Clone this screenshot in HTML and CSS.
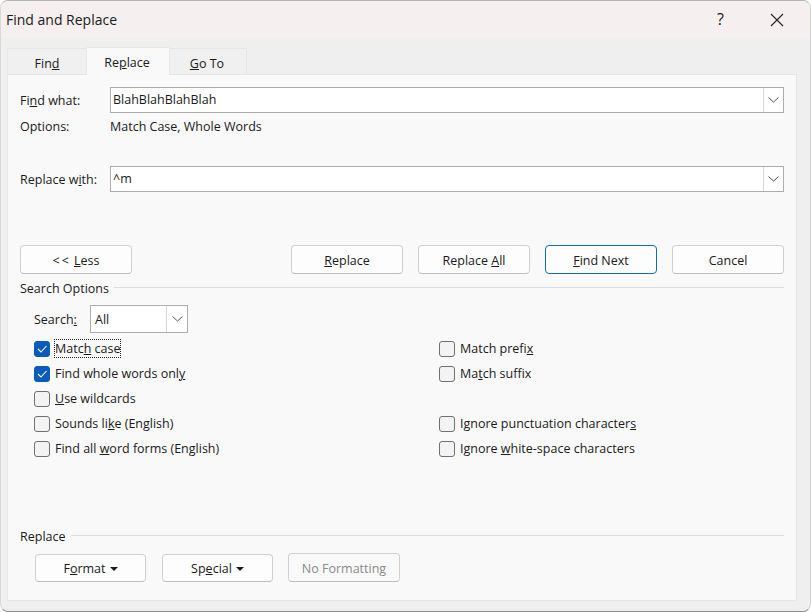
FILE: index.html

```html
<!doctype html>
<html>
    <head>
        <title>Find and Replace</title>
        <link rel="stylesheet" href="styles.css">
    </head>
    <body>
        <div class="window">
            <div class="titlebar">
                <span class="title">Find and Replace</span>
                <span class="help">?</span>
                <svg class="close" width="14" height="14" viewBox="0 0 14 14">
                    <path d="M1 1 L13 13 M13 1 L1 13" stroke="#222" stroke-width="1.1" fill="none"></path>
                </svg>
            </div>

            <div class="tabs">
                <div class="tab tab-find">Fin<u>d</u></div>
                <div class="tab tab-active">Re<u>p</u>lace</div>
                <div class="tab tab-goto"><u>G</u>o To</div>
            </div>

            <div class="panel">
                <div class="field-row">
                    <span class="field-label">Fi<u>n</u>d what:</span>
                    <div class="combo">
                        <span class="combo-text">BlahBlahBlahBlah</span>
                        <span class="combo-arrow">
                            <svg width="11" height="6" viewBox="0 0 11 6"><path d="M0.5 0.5 L5.5 5 L10.5 0.5" stroke="#555" fill="none"></path></svg>
                        </span>
                    </div>
                </div>
                <div class="options-row">
                    <span class="field-label">Options:</span>
                    <span>Match Case, Whole Words</span>
                </div>
                <div class="field-row replace-row">
                    <span class="field-label">Replace w<u>i</u>th:</span>
                    <div class="combo">
                        <span class="combo-text">^m</span>
                        <span class="combo-arrow">
                            <svg width="11" height="6" viewBox="0 0 11 6"><path d="M0.5 0.5 L5.5 5 L10.5 0.5" stroke="#555" fill="none"></path></svg>
                        </span>
                    </div>
                </div>

                <div class="button-row">
                    <button class="btn"><span class="arrows">&lt;&lt;</span> <u>L</u>ess</button>
                    <div class="button-group">
                        <button class="btn"><u>R</u>eplace</button>
                        <button class="btn">Replace <u>A</u>ll</button>
                        <button class="btn btn-default"><u>F</u>ind Next</button>
                        <button class="btn">Cancel</button>
                    </div>
                </div>

                <div class="section section-search">
                    <span>Search Options</span>
                    <div class="section-line"></div>
                </div>

                <div class="search-row">
                    <span class="search-label">Search<u>:</u></span>
                    <div class="combo combo-small">
                        <span class="combo-text combo-text-small">All</span>
                        <span class="combo-arrow combo-arrow-small">
                            <svg width="11" height="6" viewBox="0 0 11 6"><path d="M0.5 0.5 L5.5 5 L10.5 0.5" stroke="#555" fill="none"></path></svg>
                        </span>
                    </div>
                </div>

                <div class="checks">
                    <div class="check"><span class="box box-on"><svg width="12" height="10" viewBox="0 0 12 10"><path d="M2 5 L5 8 L10.5 2" stroke="#fff" stroke-width="1.1" fill="none"></path></svg></span><span class="focused">Matc<u>h</u> case</span></div>
                    <div class="check"><span class="box"></span><span>Match prefi<u>x</u></span></div>
                    <div class="check"><span class="box box-on"><svg width="12" height="10" viewBox="0 0 12 10"><path d="M2 5 L5 8 L10.5 2" stroke="#fff" stroke-width="1.1" fill="none"></path></svg></span><span>Find whole words onl<u>y</u></span></div>
                    <div class="check"><span class="box"></span><span>Ma<u>t</u>ch suffix</span></div>
                    <div class="check"><span class="box"></span><span><u>U</u>se wildcards</span></div>
                    <div></div>
                    <div class="check"><span class="box"></span><span>Sounds li<u>k</u>e (English)</span></div>
                    <div class="check"><span class="box"></span><span>Ignore punctuation character<u>s</u></span></div>
                    <div class="check"><span class="box"></span><span>Find all <u>w</u>ord forms (English)</span></div>
                    <div class="check"><span class="box"></span><span>Ignore <u>w</u>hite-space characters</span></div>
                </div>

                <div class="section section-replace">
                    <span>Replace</span>
                    <div class="section-line"></div>
                </div>

                <div class="format-row">
                    <button class="btn">F<u>o</u>rmat<span class="caret"></span></button>
                    <button class="btn">Sp<u>e</u>cial<span class="caret"></span></button>
                    <button class="btn btn-disabled">No Formatting</button>
                </div>
            </div>
        </div>
    </body>
</html>
```

FILE: styles.css

```css
html, body {
    margin: 0;
    padding: 0;
    background: #fff;
}

.window {
    box-sizing: border-box;
    width: 811px;
    height: 612px;
    background: #efefef;
    border-top: 1px solid #b4b4b4;
    border-bottom: 1px solid #8e8e8e;
    border-right: 1px solid #d0d0d0;
    border-left: 1px solid #d8d8d8;
    border-radius: 8px;
    overflow: hidden;
    font-family: "Open Sans", "Noto Sans", sans-serif;
    font-size: 12.5px;
    color: #1a1a1a;
}

u {
    text-underline-offset: 1px;
}

.titlebar {
    display: flex;
    align-items: center;
    height: 37px;
    background: #f5f0ef;
    padding-left: 5px;
}

.title {
    font-size: 14px;
    flex: 1;
}

.help {
    font-size: 16px;
    margin: -1px 46px 0 0;
}

.close {
    margin-right: 26px;
}

.tabs {
    display: flex;
    align-items: flex-end;
    height: 36px;
    padding-left: 6px;
}

.tab {
    box-sizing: border-box;
    height: 26px;
    line-height: 30px;
    text-align: center;
    background: #f0f0f0;
    border: 1px solid #e6e6e6;
    border-bottom: none;
}

.tab-find {
    width: 79px;
    border-right: none;
}

.tab-goto {
    width: 77px;
    padding-right: 2px;
    border-left: none;
}

.tab-active {
    width: 84px;
    height: 28px;
    line-height: 30px;
    padding-right: 2px;
    margin-bottom: -1px;
    background: #f9f9f9;
    border-color: #e8e8e8;
    position: relative;
}

.panel {
    box-sizing: border-box;
    height: 527px;
    margin: 0 13px 0 6px;
    padding: 12px 12px 0 12px;
    background: #f9f9f9;
    border: 1px solid #e6e6e6;
}

.field-row {
    display: flex;
    align-items: center;
}

.field-label {
    width: 90px;
    flex: none;
}

.combo {
    box-sizing: border-box;
    display: flex;
    align-items: center;
    flex: 1;
    height: 26px;
    background: #fff;
    border: 1px solid #adadad;
}

.combo-text {
    flex: 1;
    padding: 0 0 2px 2px;
}

.combo-text-small {
    padding: 0 0 0 4px;
}

.combo-arrow {
    box-sizing: border-box;
    display: flex;
    align-items: center;
    justify-content: center;
    width: 20px;
    height: 24px;
    border-left: 1px solid #d6d6d6;
}

.options-row {
    display: flex;
    align-items: center;
    height: 17px;
    margin-top: 5px;
}

.replace-row {
    margin-top: 31px;
}

.button-row {
    display: flex;
    justify-content: space-between;
    margin-top: 53px;
}

.button-group {
    display: flex;
    gap: 15px;
}

.btn {
    box-sizing: border-box;
    width: 112px;
    height: 29px;
    padding: 1px 0 0;
    font: inherit;
    color: inherit;
    background: #fdfdfd;
    border: 1px solid #d0d0d0;
    border-bottom-color: #bdbdbd;
    border-radius: 4px;
}

.arrows {
    letter-spacing: 2px;
}

.btn-default {
    border-color: #0f6cbd;
}

.btn-disabled {
    color: #8a8a8a;
    background: #f9f9f9;
}

.section {
    display: flex;
    align-items: center;
    gap: 5px;
    height: 17px;
}

.section-search {
    margin-top: 6px;
}

.section-line {
    flex: 1;
    height: 1px;
    margin-top: -2px;
    background: #dedede;
}

.search-row {
    display: flex;
    align-items: center;
    margin-top: 8px;
    padding-left: 14px;
}

.search-label {
    width: 56px;
}

.combo-small {
    flex: none;
    width: 98px;
    height: 28px;
}

.combo-arrow-small {
    width: 21px;
    height: 26px;
}

.checks {
    display: grid;
    grid-template-columns: 405px 1fr;
    grid-auto-rows: 25px;
    margin-top: 3px;
    padding-left: 14px;
}

.check {
    display: flex;
    align-items: center;
    gap: 5px;
}

.box {
    box-sizing: border-box;
    display: flex;
    align-items: center;
    justify-content: center;
    width: 16px;
    height: 16px;
    background: #f3f3f3;
    border: 1px solid #707070;
    border-radius: 3px;
}

.box-on {
    background: #0b5cba;
    border-color: #0b5cba;
}

.focused {
    outline: 1px dotted #222;
    outline-offset: 0;
}

.section-replace {
    margin-top: 67px;
}

.format-row {
    display: flex;
    align-items: flex-end;
    margin-top: 8px;
    padding-left: 15px;
}

.format-row .btn {
    width: 111px;
    height: 28px;
    margin-right: 16px;
}

.format-row .btn-disabled {
    width: 112px;
    height: 29px;
    margin: 0 0 0 -1px;
}

.caret {
    display: inline-block;
    margin-left: 4px;
    vertical-align: 2px;
    border-left: 4px solid transparent;
    border-right: 4px solid transparent;
    border-top: 4px solid #1a1a1a;
}
```
